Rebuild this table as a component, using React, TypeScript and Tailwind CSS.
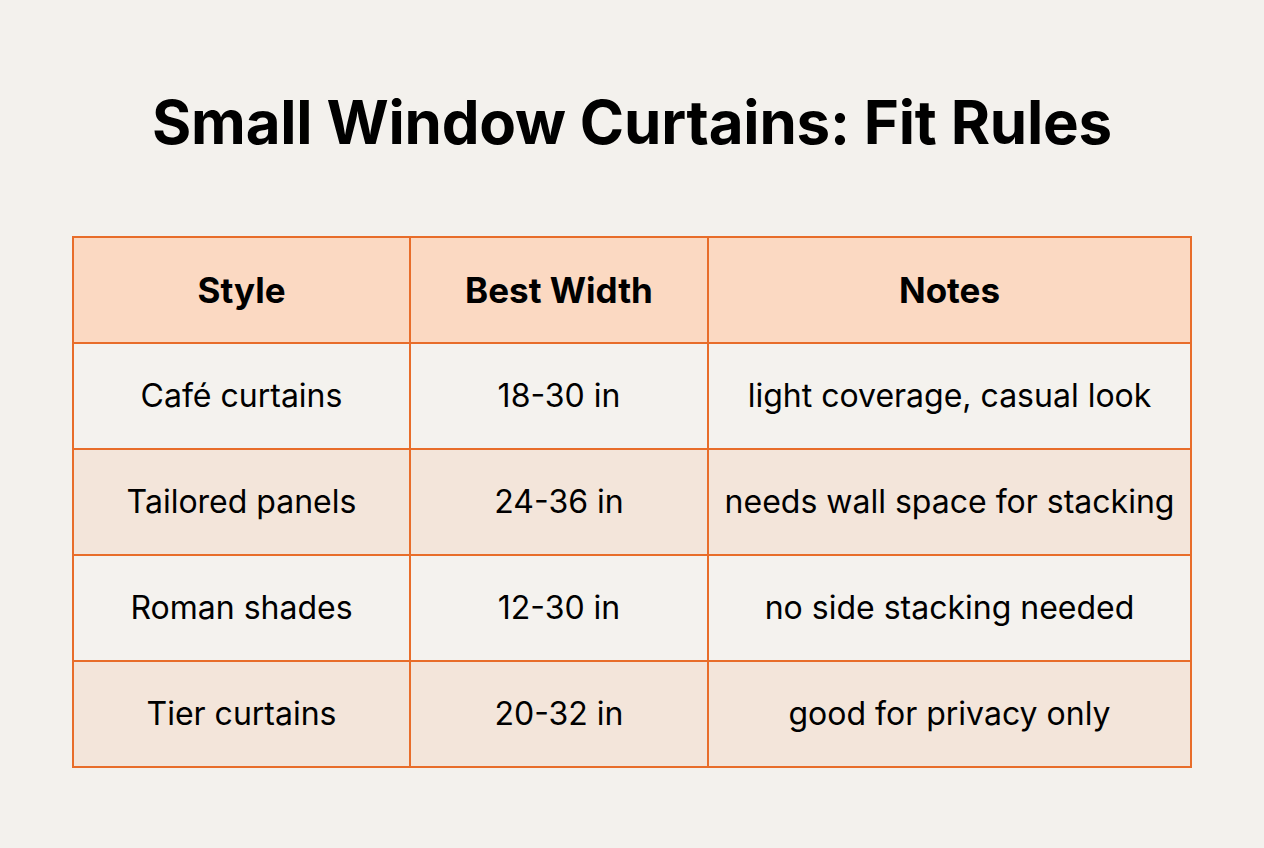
const rows = [
  { style: "Café curtains", width: "18-30 in", notes: "light coverage, casual look" },
  { style: "Tailored panels", width: "24-36 in", notes: "needs wall space for stacking" },
  { style: "Roman shades", width: "12-30 in", notes: "no side stacking needed" },
  { style: "Tier curtains", width: "20-32 in", notes: "good for privacy only" },
];

export default function App() {
  return (
    <div
      className="w-[1264px] h-[848px] bg-[#f3f1ed] text-black flex flex-col items-center"
      style={{ fontFamily: "Inter, 'Noto Sans', sans-serif" }}
    >
      <h1 className="mt-[84px] text-[60px] leading-[76px] font-bold tracking-[-0.2px]">
        Small Window Curtains: Fit Rules
      </h1>

      <table className="mt-[76px] w-[1120px] border-collapse border-2 border-[#e86d2a] text-[32px] text-center">
        <thead>
          <tr className="bg-[#fbd9c2] h-[106px]">
            <th className="w-[337px] border-2 border-[#e86d2a] font-bold text-[35px]">Style</th>
            <th className="w-[298px] border-2 border-[#e86d2a] font-bold text-[35px]">Best Width</th>
            <th className="border-2 border-[#e86d2a] font-bold text-[35px]">Notes</th>
          </tr>
        </thead>
        <tbody>
          {rows.map((r, i) => (
            <tr key={r.style} className={i % 2 === 0 ? "bg-[#f4f2ee] h-[106px]" : "bg-[#f3e5da] h-[106px]"}>
              <td className="border-2 border-[#e86d2a]">{r.style}</td>
              <td className="border-2 border-[#e86d2a]">{r.width}</td>
              <td className="border-2 border-[#e86d2a] whitespace-nowrap">{r.notes}</td>
            </tr>
          ))}
        </tbody>
      </table>
    </div>
  );
}
